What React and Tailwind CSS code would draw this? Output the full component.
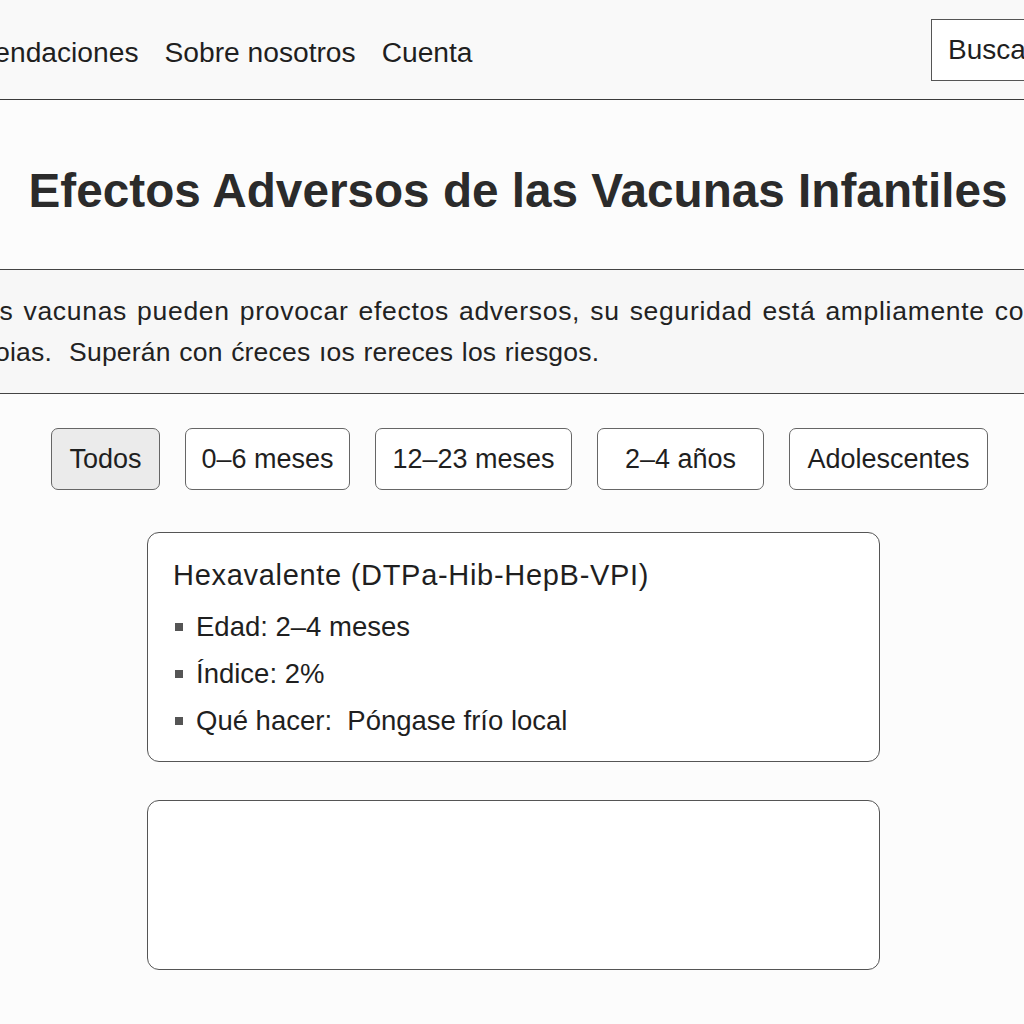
const filters = [
  { label: 'Todos', w: 'w-[109px]', active: true },
  { label: '0–6 meses', w: 'w-[165px]' },
  { label: '12–23 meses', w: 'w-[197px]' },
  { label: '2–4 años', w: 'w-[167px]' },
  { label: 'Adolescentes', w: 'w-[199px]' },
];

const details = ['Edad: 2–4 meses', 'Índice: 2%', 'Qué hacer:  Póngase frío local'];

const App = () => {
  return (
    <div className="w-[1024px] h-[1024px] overflow-hidden bg-[#fcfcfc] text-[#1f1f1f] font-['Liberation_Sans',Arial,sans-serif]">
      {/* Header */}
      <header className="h-[100px] bg-[#f9f9f9] border-b border-[#3a3a3a] flex items-center justify-between">
        <nav className="flex items-center gap-[26px] -ml-[95px] text-[28.2px] pt-[5px]">
          <a>Recomendaciones</a>
          <a>Sobre nosotros</a>
          <a>Cuenta</a>
        </nav>
        <div className="shrink-0 w-[180px] h-[62px] -mr-[87px] border border-[#555] bg-white flex items-center pl-[16px] text-[28px]">
          Buscar...
        </div>
      </header>

      {/* Title */}
      <div className="h-[169px] flex items-center justify-center pt-[13px] pl-[12px]">
        <h1 className="text-[47.7px] font-bold text-[#2b2b2b] whitespace-nowrap leading-none">
          Efectos Adversos de las Vacunas Infantiles
        </h1>
      </div>

      {/* Intro */}
      <div className="h-[125px] bg-[#f7f7f7] border-y border-[#444] flex flex-col justify-center -ml-[16px] text-[26.5px] leading-[41px] whitespace-pre text-[#222]">
        <p className="tracking-[0.7px] [word-spacing:2px]">as vacunas pueden provocar efectos adversos, su seguridad está ampliamente comprobada</p>
        <p className="pl-[11px] tracking-[0.2px] [word-spacing:1px]">oias.  Superán con ćreces ıos rereces los riesgos.</p>
      </div>

      {/* Filters */}
      <div className="mt-[34px] flex gap-[25px] pl-[51px]">
        {filters.map((f) => (
          <button
            key={f.label}
            className={`${f.w} h-[62px] rounded-[7px] border border-[#666] text-[27px] flex items-center justify-center ${f.active ? 'bg-[#ebebeb]' : 'bg-white'}`}
          >
            {f.label}
          </button>
        ))}
      </div>

      {/* Cards */}
      <div className="mt-[42px] ml-[147px] w-[733px] flex flex-col gap-[38px]">
        <div className="h-[230px] rounded-[12px] border border-[#555] bg-white pt-[25px] pl-[25px]">
          <h3 className="text-[29px] tracking-[0.7px] leading-[34px]">Hexavalente (DTPa-Hib-HepB-VPI)</h3>
          <ul className="mt-[11px]">
            {details.map((d) => (
              <li key={d} className="flex items-center gap-[13px] pl-[2px] text-[27.5px] leading-[47px] whitespace-pre">
                <span className="w-[8px] h-[8px] bg-[#555] shrink-0" />
                {d}
              </li>
            ))}
          </ul>
        </div>
        <div className="h-[170px] rounded-[12px] border border-[#555] bg-white" />
      </div>
    </div>
  );
};

export default App;
